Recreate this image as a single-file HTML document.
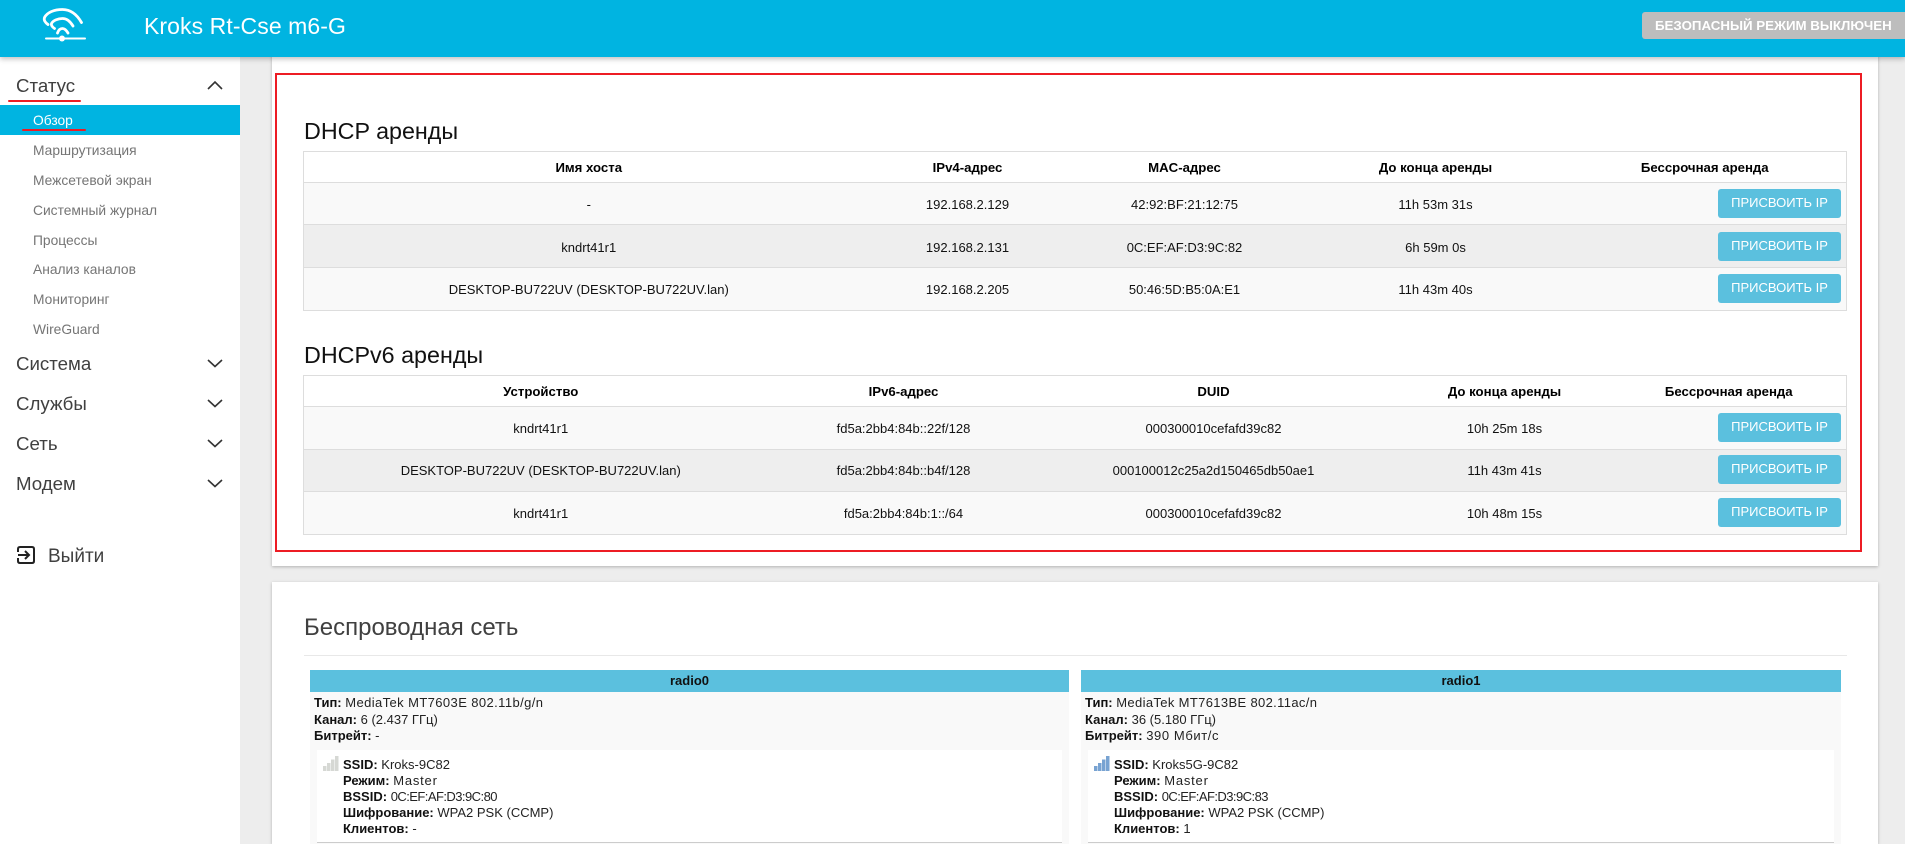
<!DOCTYPE html>
<html lang="ru"><head><meta charset="utf-8"><title>Kroks Rt-Cse m6-G</title>
<style>
*{box-sizing:border-box}
html,body{margin:0;padding:0;width:1905px;height:844px;overflow:hidden;background:#ededed;font-family:"Liberation Sans",sans-serif;color:#111}
#w{position:relative;width:1905px;height:844px;overflow:hidden;background:#ededed}
header{position:absolute;left:0;top:0;width:1905px;height:57px;background:#00b4e1;box-shadow:0 2px 5px rgba(0,0,0,.25);z-index:5}
header .t{position:absolute;left:144px;top:11px;font-size:23px;letter-spacing:.08px;line-height:30px;color:#fff;white-space:nowrap}
header svg{position:absolute;left:0;top:0}
.badge{position:absolute;left:1642px;top:12px;width:263px;height:27px;background:#bdbdbd;border-radius:3px 0 0 3px;color:#fff;font-weight:bold;font-size:13.3px;line-height:27px;padding-left:13px;white-space:nowrap}
aside{position:absolute;left:0;top:57px;width:240px;height:787px;background:#fff}
.m{position:absolute;left:16px;font-size:18.7px;line-height:26px;color:#404040;white-space:nowrap}
.s{position:absolute;left:33px;font-size:13.8px;line-height:20px;color:#757575;white-space:nowrap}
.act{position:absolute;left:0;top:105px;width:240px;height:30px;background:#00b4e1;z-index:1}
.u{position:absolute;height:2px;background:#ed1c24;border-radius:1px;z-index:3}
.chev{position:absolute;left:0;top:0;z-index:2}
.card{position:absolute;left:272px;width:1606px;background:#fff;box-shadow:0 1px 3px rgba(0,0,0,.25)}
.red{position:absolute;left:275px;top:73px;width:1587px;height:479px;border:2px solid #ed1c24;z-index:2}
h3{position:absolute;left:304px;margin:0;font-weight:normal;font-size:23.3px;line-height:30px;color:#111;white-space:nowrap;z-index:3}
table{position:absolute;left:303px;width:1543px;border-collapse:collapse;table-layout:fixed;font-size:13px;color:#111;z-index:3;border:1px solid #ddd}
th,td{border-top:1px solid #ddd;border-bottom:1px solid #ddd;text-align:center;padding:0;white-space:nowrap;font-weight:normal}
th{font-weight:bold;background:#fff;color:#000;height:31px;font-size:13.2px}
td{padding-top:2px}
td.n{padding-top:0}
tr.a td{background:#f9f9f9}tr.b td{background:#eee}
td.b{text-align:right;padding:0 5px 0 0}
.btn{display:inline-block;vertical-align:middle;width:123px;height:29px;line-height:28px;text-align:center;background:#5bc0de;border-radius:3px;color:#fff;font-size:13px;position:relative}
.up{top:-1px}
.h2{position:absolute;left:304px;top:612px;font-size:24px;line-height:32px;color:#404040;white-space:nowrap}
.hr{position:absolute;left:304px;top:655px;width:1543px;height:1px;background:#e8e8e8}
.rb{position:absolute;top:670px;height:174px;background:#f9f9f9}
.rb .hd{position:absolute;left:0;top:0;width:100%;height:22px;background:#5bc0de;color:#111;text-align:center;font-weight:bold;font-size:13px;line-height:22px}
.ln{position:absolute;font-size:13px;line-height:16px;white-space:nowrap;color:#222}
.ln b{color:#111}
.inner{position:absolute;top:80px;left:7px;height:93px;background:#fff;border-bottom:1px solid #ccc}
</style></head><body>
<div id="w">
<header>
<svg width="100" height="50" viewBox="0 0 100 50" fill="none" stroke="#fff" stroke-width="2.800" stroke-linecap="round">
<path d="M81.500 22.500C76 13 69 9.500 62.500 9.500C54 9.500 47 12.500 44.500 17.500C43.500 20 45.500 23 48 24.500"/>
<path d="M73 26C70 21 66 18.500 62.500 18.500C58 18.500 53 20.500 51.500 23.500C51 25.500 53 27.500 54.500 28.500"/>
<path d="M68 33C66.500 30.500 64.500 28.500 62.500 28.500C60.500 28.500 58.500 30 57.500 33"/>
<path d="M46 38.500H85" stroke-width="2"/><circle cx="62" cy="38.500" r="3" fill="#fff" stroke="none"/>
</svg>
<div class="t">Kroks Rt-Cse m6-G</div>
<div class="badge">БЕЗОПАСНЫЙ РЕЖИМ ВЫКЛЮЧЕН</div>
</header>
<aside></aside>
<div class="act"></div>
<div class="m" style="top:73px">Статус</div>
<div class="u" style="left:8px;top:100px;width:73px"></div>
<div class="s" style="top:111px;color:#fff;z-index:2">Обзор</div>
<div class="u" style="left:22px;top:129px;width:64px"></div>
<div class="s" style="top:141px">Маршрутизация</div>
<div class="s" style="top:171px">Межсетевой экран</div>
<div class="s" style="top:201px">Системный журнал</div>
<div class="s" style="top:231px">Процессы</div>
<div class="s" style="top:260px">Анализ каналов</div>
<div class="s" style="top:290px">Мониторинг</div>
<div class="s" style="top:320px">WireGuard</div>
<div class="m" style="top:351px">Система</div>
<div class="m" style="top:391px">Службы</div>
<div class="m" style="top:431px">Сеть</div>
<div class="m" style="top:471px">Модем</div>
<div class="m" style="left:48px;top:544px;font-size:19px">Выйти</div>
<svg class="chev" width="240" height="580" fill="none" stroke="#333" stroke-width="1.600">
<path d="M208 89L215 82L222 89"/><path d="M208 360L215 366.500L222 360"/><path d="M208 400L215 406.500L222 400"/><path d="M208 440L215 446.500L222 440"/><path d="M208 480L215 486.500L222 480"/>
<path d="M18 552V549Q18 547 20 547H32Q34 547 34 549V561Q34 563 32 563H20Q18 563 18 561V558" stroke="#222" stroke-width="2"/>
<path d="M18 555H29M25 551L29 555L25 559" stroke="#222" stroke-width="2"/>
</svg>

<div class="card" style="top:40px;height:526px"></div>
<div class="red"></div>
<h3 style="top:116px">DHCP аренды</h3>
<table style="top:151px">
<colgroup><col style="width:570px"><col style="width:188px"><col style="width:246px"><col style="width:256px"><col style="width:283px"></colgroup>
<tr><th>Имя хоста</th><th>IPv4-адрес</th><th>MAC-адрес</th><th>До конца аренды</th><th>Бессрочная аренда</th></tr>
<tr class="a" style="height:42px"><td>-</td><td>192.168.2.129</td><td>42:92:BF:21:12:75</td><td>11h 53m 31s</td><td class="b"><span class="btn">ПРИСВОИТЬ IP</span></td></tr>
<tr class="b" style="height:43px"><td>kndrt41r1</td><td>192.168.2.131</td><td>0C:EF:AF:D3:9C:82</td><td>6h 59m 0s</td><td class="b"><span class="btn">ПРИСВОИТЬ IP</span></td></tr>
<tr class="a" style="height:43px"><td class="n">DESKTOP-BU722UV (DESKTOP-BU722UV.lan)</td><td class="n">192.168.2.205</td><td class="n">50:46:5D:B5:0A:E1</td><td class="n">11h 43m 40s</td><td class="b"><span class="btn up">ПРИСВОИТЬ IP</span></td></tr>
</table>
<h3 style="top:340px">DHCPv6 аренды</h3>
<table style="top:375px">
<colgroup><col style="width:474px"><col style="width:252px"><col style="width:368px"><col style="width:214px"><col style="width:235px"></colgroup>
<tr><th>Устройство</th><th>IPv6-адрес</th><th>DUID</th><th>До конца аренды</th><th>Бессрочная аренда</th></tr>
<tr class="a" style="height:43px"><td class="n">kndrt41r1</td><td class="n">fd5a:2bb4:84b::22f/128</td><td class="n">000300010cefafd39c82</td><td class="n">10h 25m 18s</td><td class="b"><span class="btn up">ПРИСВОИТЬ IP</span></td></tr>
<tr class="b" style="height:42px"><td class="n">DESKTOP-BU722UV (DESKTOP-BU722UV.lan)</td><td class="n">fd5a:2bb4:84b::b4f/128</td><td class="n">000100012c25a2d150465db50ae1</td><td class="n">11h 43m 41s</td><td class="b"><span class="btn up">ПРИСВОИТЬ IP</span></td></tr>
<tr class="a" style="height:43px"><td class="n">kndrt41r1</td><td class="n">fd5a:2bb4:84b:1::/64</td><td class="n">000300010cefafd39c82</td><td class="n">10h 48m 15s</td><td class="b"><span class="btn up">ПРИСВОИТЬ IP</span></td></tr>
</table>

<div class="card" style="top:582px;height:262px"></div>
<div class="h2">Беспроводная сеть</div>
<div class="hr"></div>

<div class="rb" style="left:310px;width:759px">
<div class="hd">radio0</div>
<div class="ln" style="left:4px;top:25px"><b>Тип:</b> <span style="letter-spacing:.4px">MediaTek MT7603E 802.11b/g/n</span></div>
<div class="ln" style="left:4px;top:42px"><b>Канал:</b> 6 (2.437 ГГц)</div>
<div class="ln" style="left:4px;top:58px"><b>Битрейт:</b> -</div>
<div class="inner" style="width:745px"></div>
<svg style="position:absolute;left:13px;top:86px" width="16" height="15"><path d="M0 15V10H3.500V15ZM4 15V7H7.500V15ZM8 15V3.500H11.500V15ZM12 15V0H15.500V15Z" fill="#d6d8d4"/></svg>
<div class="ln" style="left:33px;top:87px"><b>SSID:</b> Kroks-9C82</div>
<div class="ln" style="left:33px;top:103px"><b>Режим:</b> <span style="letter-spacing:.8px">Master</span></div>
<div class="ln" style="left:33px;top:119px"><b>BSSID:</b> <span style="letter-spacing:-.55px">0C:EF:AF:D3:9C:80</span></div>
<div class="ln" style="left:33px;top:135px"><b>Шифрование:</b> WPA2 PSK (CCMP)</div>
<div class="ln" style="left:33px;top:151px"><b>Клиентов:</b> -</div>
</div>

<div class="rb" style="left:1081px;width:760px">
<div class="hd">radio1</div>
<div class="ln" style="left:4px;top:25px"><b>Тип:</b> <span style="letter-spacing:.35px">MediaTek MT7613BE 802.11ac/n</span></div>
<div class="ln" style="left:4px;top:42px"><b>Канал:</b> 36 (5.180 ГГц)</div>
<div class="ln" style="left:4px;top:58px"><b>Битрейт:</b> <span style="letter-spacing:.6px">390 Мбит/с</span></div>
<div class="inner" style="width:746px"></div>
<svg style="position:absolute;left:13px;top:86px" width="16" height="15"><path d="M0 15V10H3.500V15ZM4 15V7H7.500V15ZM8 15V3.500H11.500V15ZM12 15V0H15.500V15Z" fill="#78a3d2"/></svg>
<div class="ln" style="left:33px;top:87px"><b>SSID:</b> Kroks5G-9C82</div>
<div class="ln" style="left:33px;top:103px"><b>Режим:</b> <span style="letter-spacing:.8px">Master</span></div>
<div class="ln" style="left:33px;top:119px"><b>BSSID:</b> <span style="letter-spacing:-.55px">0C:EF:AF:D3:9C:83</span></div>
<div class="ln" style="left:33px;top:135px"><b>Шифрование:</b> WPA2 PSK (CCMP)</div>
<div class="ln" style="left:33px;top:151px"><b>Клиентов:</b> 1</div>
</div>
</div>
</body></html>
